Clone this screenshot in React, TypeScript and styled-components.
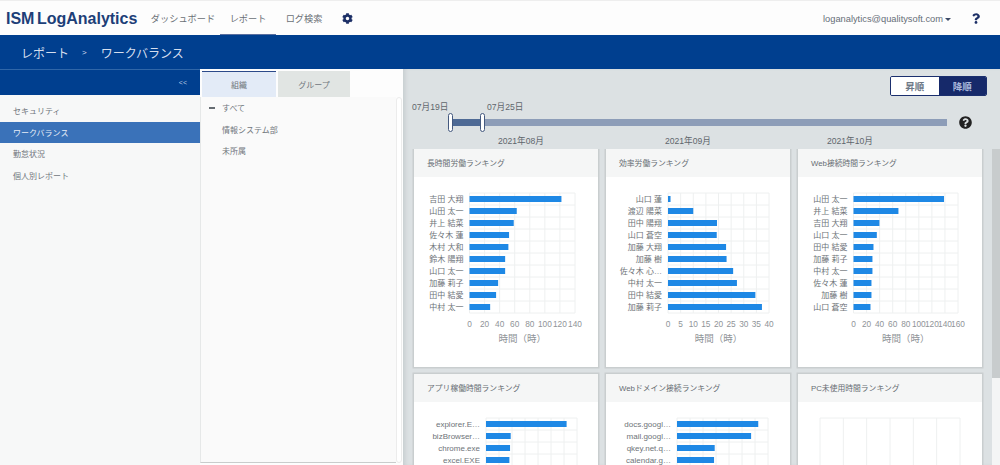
import React from 'react';
import styled, { createGlobalStyle } from 'styled-components';
import { FaCog, FaQuestionCircle, FaQuestion } from 'react-icons/fa';

const GlobalStyle = createGlobalStyle`
  html, body {
    margin: 0;
    padding: 0;
    height: 465px;
    overflow: hidden;
    background: #ffffff;
    font-family: "Liberation Sans", "Noto Sans CJK JP", sans-serif;
    color: #555b60;
  }
  * { box-sizing: border-box; }
`;

const Page = styled.div`
  width: 1000px;
  height: 465px;
  display: flex;
  flex-direction: column;
  overflow: hidden;
`;

const TopBar = styled.header`
  height: 35px;
  flex: none;
  display: flex;
  align-items: center;
  padding: 1px 0 0 6px;
  background: #fdfdfd;
  border-top: 1px solid #eeeeee;
`;

const Logo = styled.div`
  font-weight: 700;
  font-size: 16px;
  word-spacing: -2px;
  color: #1d3f78;
  width: 140px;
  white-space: nowrap;
`;

const NavItem = styled.a<{ $active?: boolean; $width: number }>`
  height: 34px;
  display: flex;
  align-items: center;
  justify-content: center;
  width: ${p => p.$width}px;
  font-size: 9.2px;
  color: #6a7076;
  border-bottom: 2px solid ${p => (p.$active ? '#5a6f9f' : 'transparent')};
`;

const GearIcon = styled(FaCog)`
  width: 11px;
  height: 11px;
  margin-left: 10px;
  color: #1c2f66;
`;

const UserMenu = styled.div`
  margin-left: auto;
  display: flex;
  align-items: center;
  font-size: 9.3px;
  color: #666e78;
`;

const Caret = styled.span`
  width: 0;
  height: 0;
  margin: 1px 0 0 2px;
  border-left: 3px solid transparent;
  border-right: 3px solid transparent;
  border-top: 3px solid #3d4a66;
`;

const HelpIcon = styled(FaQuestion)`
  width: 8px;
  height: 11px;
  margin: 0 20px 0 21px;
  color: #1c2f66;
`;

const Breadcrumb = styled.div`
  height: 34px;
  flex: none;
  display: flex;
  align-items: center;
  padding-left: 21px;
  background: #003f8f;
  color: #d5deee;
  font-size: 12px;
`;

const CrumbSep = styled.span`
  font-size: 8px;
  margin: 0 14px 0 13px;
`;

const Body = styled.div`
  flex: 1;
  min-height: 0;
  display: flex;
`;

const Sidebar = styled.aside`
  width: 200px;
  flex: none;
  background: #f7f8f8;
`;

const SidebarHead = styled.div`
  height: 26px;
  display: flex;
  align-items: center;
  justify-content: flex-end;
  padding-right: 13px;
  background: #003f8f;
  border-top: 1px solid #2f66a8;
  color: #b9c8e0;
  font-size: 7px;
  margin-bottom: 5px;
`;

const SideItem = styled.div<{ $active?: boolean }>`
  height: 21.5px;
  display: flex;
  align-items: center;
  padding-left: 13px;
  font-size: 8px;
  color: ${p => (p.$active ? '#e6edf7' : '#70767c')};
  background: ${p => (p.$active ? '#3a72b9' : 'transparent')};
`;

const OrgColumn = styled.section`
  width: 203px;
  flex: none;
  display: flex;
  flex-direction: column;
  padding: 2px 0 2px 0;
  background: #fdfdfd;
  position: relative;
`;

const Tabs = styled.div`
  display: flex;
  gap: 2px;
  height: 26px;
  flex: none;
  padding-left: 2px;
`;

const Tab = styled.div<{ $active?: boolean }>`
  width: ${p => (p.$active ? 74 : 72)}px;
  display: flex;
  align-items: center;
  justify-content: center;
  font-size: 8px;
  color: #70767c;
  background: ${p => (p.$active ? '#e3ebf7' : '#e1e5e3')};
  border-top: ${p => (p.$active ? '1px solid #2c4a8a' : 'none')};
`;

const TreePanel = styled.div`
  flex: 1;
  width: 196px;
  background: #fafafa;
  border-left: 1px solid #e6e8e8;
  border-bottom: 1px solid #c9cccc;
`;

const TreeRow = styled.div`
  height: 21.5px;
  display: flex;
  align-items: center;
  padding-left: 21px;
  position: relative;
  font-size: 8px;
  color: #70767c;
`;

const TreeDash = styled.span`
  position: absolute;
  left: 8px;
  top: 10px;
  width: 6px;
  height: 1.5px;
  background: #666c72;
`;

const TreeRail = styled.div`
  position: absolute;
  right: 1px;
  top: 28px;
  bottom: 2px;
  width: 6px;
  background: #ffffff;
  border: 1px solid #ececec;
  border-radius: 3px;
`;

const Main = styled.main`
  flex: 1;
  min-width: 0;
  display: flex;
  flex-direction: column;
  background: #dce1e3;
  box-shadow: inset 4px 0 4px -2px #c6cccf;
  position: relative;
`;

const ToolRow = styled.div`
  display: flex;
  justify-content: flex-end;
  padding: 7px 13px 0 0;
  height: 27px;
  flex: none;
`;

const Toggle = styled.div`
  display: flex;
  width: 97px;
  height: 20px;
  border: 1.5px solid #1b2f6e;
  border-radius: 2px;
  overflow: hidden;
`;

const ToggleOption = styled.div<{ $on?: boolean }>`
  flex: 1;
  display: flex;
  align-items: center;
  justify-content: center;
  font-size: 9.5px;
  font-weight: 700;
  color: ${p => (p.$on ? '#a9b8dc' : '#6d7886')};
  background: ${p => (p.$on ? '#16296a' : '#ffffff')};
`;

const SliderArea = styled.div`
  position: relative;
  height: 30px;
  flex: none;
  margin-left: 48px;
  margin-top: 8px;
  width: 496px;
`;

const SliderDate = styled.span<{ $left: number }>`
  position: absolute;
  left: ${p => p.$left}px;
  top: -3px;
  font-size: 8.6px;
  line-height: 13px;
  color: #5f666c;
  white-space: nowrap;
`;

const SliderTrack = styled.div`
  position: absolute;
  left: 0;
  right: 0;
  top: 15px;
  height: 7px;
  background: #8d9db8;
`;

const SliderRange = styled.div`
  position: absolute;
  left: 0;
  top: 15px;
  height: 7px;
  background: #4e6a95;
`;

const SliderHandle = styled.div<{ $left: number }>`
  position: absolute;
  left: ${p => p.$left}px;
  top: 9px;
  width: 5px;
  height: 19px;
  margin-left: -3px;
  background: #ffffff;
  border: 1px solid #44597f;
  border-radius: 3px;
`;

const SliderHelp = styled(FaQuestionCircle)`
  position: absolute;
  left: 508px;
  top: 12px;
  width: 13px;
  height: 13px;
  color: #222222;
`;

const MonthRow = styled.div`
  display: grid;
  grid-template-columns: 167px 162px 160px;
  margin-left: 95px;
  height: 13px;
  flex: none;
  font-size: 8.6px;
  line-height: 13px;
  margin-top: 1px;
  color: #5f666c;
`;

const Scroller = styled.div`
  flex: 1;
  min-height: 0;
  overflow: hidden;
  padding: 0 0 0 11px;
  margin-top: 1px;
`;

const CardGrid = styled.div`
  display: grid;
  grid-template-columns: repeat(3, 184px);
  column-gap: 8px;
  row-gap: 7px;
`;

const Card = styled.article`
  height: 218px;
  background: #ffffff;
  box-shadow: 0 0 0 1.5px #c9cecf;
`;

const CardHead = styled.div`
  height: 28px;
  display: flex;
  align-items: center;
  padding: 0 0 1px 13px;
  font-size: 7.8px;
  color: #666c72;
  background: #f5f6f6;
`;

const ChartSvg = styled.svg`
  display: block;
  width: 184px;
  height: 190px;
`;

const ScrollTrack = styled.div`
  position: absolute;
  right: 0;
  top: 80px;
  bottom: 0;
  width: 8px;
  background: #f4f5f5;
`;

const ScrollThumb = styled.div`
  height: 229px;
  background: #c8cccd;
`;

const AXIS_TEXT = '#8f9498';
const LABEL_TEXT = '#6e7378';
const BAR = '#1e88e5';
const GRID = '#eef0f0';

interface ChartProps {
  title: string;
  x0: number;
  x1: number;
  max: number;
  step: number;
  rows: [string, number][];
}

const Chart: React.FC<ChartProps> = ({ title, x0, x1, max, step, rows }) => {
  const top = 16;
  const rowHeight = 12;
  const bottom = top + rowHeight * 10;
  const scale = (x1 - x0) / max;
  const ticks: number[] = [];
  for (let t = 0; t <= max; t += step) ticks.push(t);
  // the lower row of cards runs off the page, its axis is never seen
  const showAxis = rows.length === 10;
  // an empty chart only has its vertical lines and the top one
  const hLines = rows.length > 0 ? 11 : 1;

  return (
    <Card>
      <CardHead>{title}</CardHead>
      <ChartSvg viewBox="0 0 184 190">
        {ticks.map(t => (
          <line key={t} x1={x0 + t * scale} x2={x0 + t * scale} y1={top} y2={bottom} stroke={GRID} strokeWidth="1" />
        ))}
        {Array.from({ length: hLines }).map((_, i) => (
          <line key={i} x1={x0} x2={x1} y1={top + i * rowHeight} y2={top + i * rowHeight} stroke={GRID} strokeWidth="1" />
        ))}
        {rows.map(([name, value], i) => {
          const cy = top + rowHeight * i + rowHeight / 2;
          return (
            <g key={name}>
              <text x={x0 - 6} y={cy + 3} textAnchor="end" fontSize="8" fill={LABEL_TEXT}>{name}</text>
              <rect x={x0} y={cy - 3} width={value * scale} height="6" fill={BAR} />
            </g>
          );
        })}
        {showAxis && ticks.map(t => (
          <text key={t} x={x0 + t * scale} y={bottom + 14} textAnchor="middle" fontSize="8.3" fill={AXIS_TEXT}>{t}</text>
        ))}
        {showAxis && (
          <text x={(x0 + x1) / 2} y={bottom + 29} textAnchor="middle" fontSize="9.5" fill={AXIS_TEXT}>時間（時）</text>
        )}
      </ChartSvg>
    </Card>
  );
};

const charts: ChartProps[] = [
  {
    title: '長時間労働ランキング', x0: 55.5, x1: 161, max: 140, step: 20,
    rows: [['吉田 大翔', 122], ['山田 太一', 62.7], ['井上 結菜', 58.7], ['佐々木 蓮', 52.5], ['木村 大和', 51.6], ['鈴木 陽翔', 47.3], ['山口 太一', 47.3], ['加藤 莉子', 38], ['田中 結愛', 35.3], ['中村 太一', 27.4]],
  },
  {
    title: '効率労働ランキング', x0: 62, x1: 163, max: 40, step: 5,
    rows: [['山口 蓮', 1], ['渡辺 陽菜', 10], ['田中 陽翔', 19.4], ['山口 蒼空', 19.3], ['加藤 大翔', 23], ['加藤 樹', 23.2], ['佐々木 心…', 25.8], ['中村 太一', 27.3], ['田中 結愛', 34.6], ['加藤 莉子', 37.2]],
  },
  {
    title: 'Web接続時間ランキング', x0: 55.5, x1: 160, max: 160, step: 20,
    rows: [['山田 太一', 138.6], ['井上 結菜', 68.8], ['吉田 大翔', 39.7], ['山口 太一', 35.7], ['田中 結愛', 30.6], ['加藤 莉子', 29], ['中村 太一', 29], ['佐々木 蓮', 27.5], ['加藤 樹', 27.5], ['山口 蒼空', 26]],
  },
  {
    title: 'アプリ稼働時間ランキング', x0: 72, x1: 163, max: 140, step: 20,
    rows: [['explorer.E…', 124], ['bizBrowser…', 38], ['chrome.exe', 37], ['excel.EXE', 36]],
  },
  {
    title: 'Webドメイン接続ランキング', x0: 71, x1: 162, max: 140, step: 20,
    rows: [['docs.googl…', 125], ['mail.googl…', 114], ['qkey.net.q…', 58], ['calendar.g…', 57]],
  },
  { title: 'PC未使用時間ランキング', x0: 22, x1: 162, max: 120, step: 20, rows: [] },
];

const App: React.FC = () => (
  <Page>
    <GlobalStyle />
    <TopBar>
      <Logo>ISM LogAnalytics</Logo>
      <NavItem $width={74}>ダッシュボード</NavItem>
      <NavItem $width={56} $active>レポート</NavItem>
      <NavItem $width={56}>ログ検索</NavItem>
      <GearIcon />
      <UserMenu>
        loganalytics@qualitysoft.com
        <Caret />
        <HelpIcon />
      </UserMenu>
    </TopBar>
    <Breadcrumb>
      レポート<CrumbSep>&gt;</CrumbSep>ワークバランス
    </Breadcrumb>
    <Body>
      <Sidebar>
        <SidebarHead>&lt;&lt;</SidebarHead>
        <SideItem>セキュリティ</SideItem>
        <SideItem $active>ワークバランス</SideItem>
        <SideItem>勤怠状況</SideItem>
        <SideItem>個人別レポート</SideItem>
      </Sidebar>
      <OrgColumn>
        <Tabs>
          <Tab $active>組織</Tab>
          <Tab>グループ</Tab>
        </Tabs>
        <TreePanel>
          <TreeRow><TreeDash />すべて</TreeRow>
          <TreeRow>情報システム部</TreeRow>
          <TreeRow>未所属</TreeRow>
        </TreePanel>
        <TreeRail />
      </OrgColumn>
      <Main>
        <ToolRow>
          <Toggle>
            <ToggleOption>昇順</ToggleOption>
            <ToggleOption $on>降順</ToggleOption>
          </Toggle>
        </ToolRow>
        <SliderArea>
          <SliderDate $left={-39}>07月19日</SliderDate>
          <SliderDate $left={36}>07月25日</SliderDate>
          <SliderTrack />
          <SliderRange style={{ width: 32 }} />
          <SliderHandle $left={0} />
          <SliderHandle $left={32} />
          <SliderHelp />
        </SliderArea>
        <MonthRow>
          <span>2021年08月</span>
          <span>2021年09月</span>
          <span>2021年10月</span>
        </MonthRow>
        <Scroller>
          <CardGrid>
            {charts.map(c => <Chart key={c.title} {...c} />)}
          </CardGrid>
        </Scroller>
        <ScrollTrack><ScrollThumb /></ScrollTrack>
      </Main>
    </Body>
  </Page>
);

export default App;
